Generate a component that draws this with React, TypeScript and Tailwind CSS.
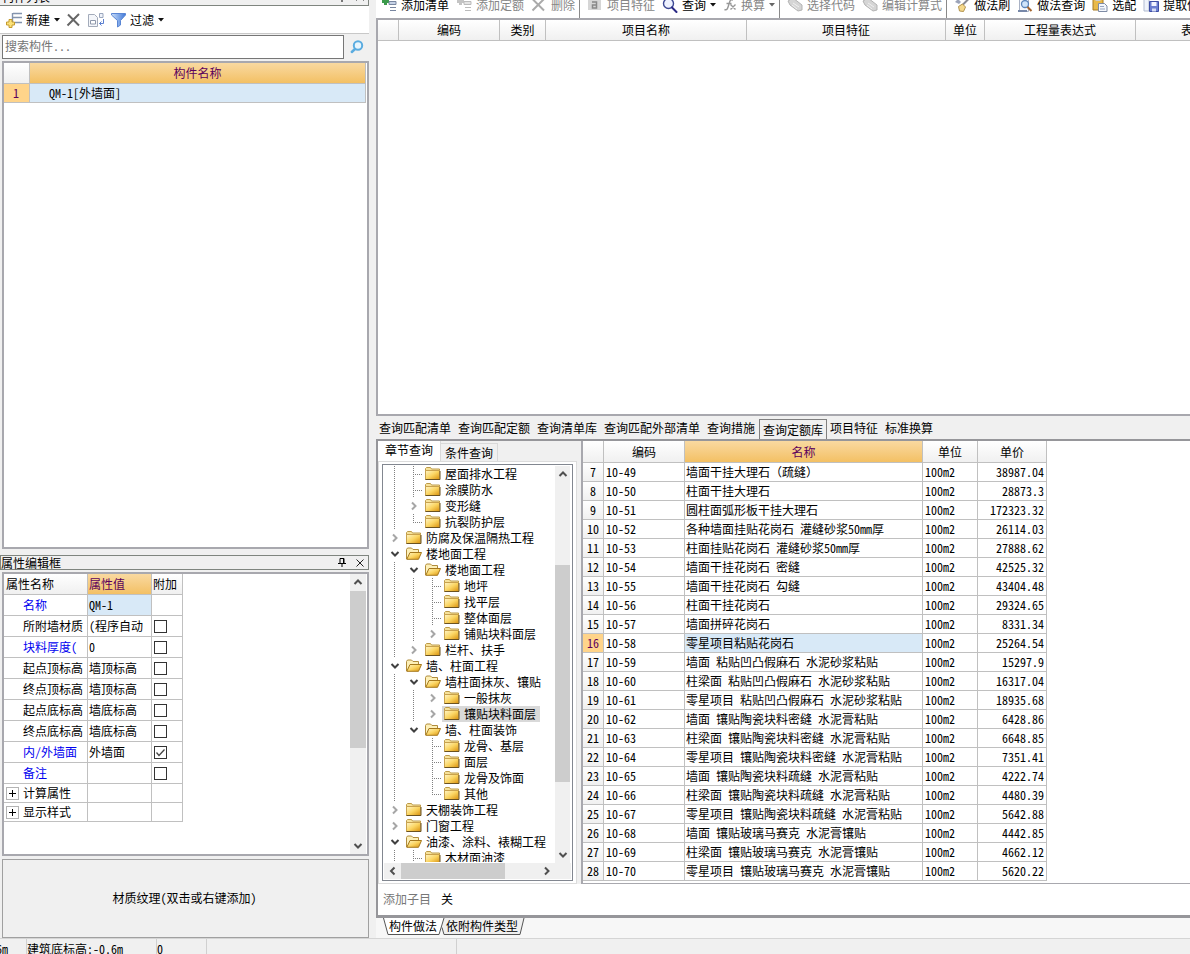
import type { ReactNode } from "react";

/* ---------- icons ---------- */

function Svg({ children, w = 16, h = 16, className = "" }: { children: ReactNode; w?: number; h?: number; className?: string }) {
  return (
    <svg aria-hidden="true" width={w} height={h} viewBox={`0 0 ${w} ${h}`} className={`block shrink-0 ${className}`}>
      {children}
    </svg>
  );
}

const Gradients = () => (
  <svg aria-hidden="true" width="0" height="0" className="absolute">
    <defs>
      <linearGradient id="folder" x1="0" y1="0" x2="1" y2="1">
        <stop offset="0" stopColor="#fff6c8" />
        <stop offset="0.5" stopColor="#fbd562" />
        <stop offset="1" stopColor="#d8900c" />
      </linearGradient>
      <linearGradient id="funnel" x1="0" y1="0" x2="1" y2="0">
        <stop offset="0" stopColor="#c9defa" />
        <stop offset="1" stopColor="#3f78d8" />
      </linearGradient>
    </defs>
  </svg>
);

const NewIcon = () => (
  <Svg>
    <path d="M6.500 1v9M7 1.500h9M7 5.500h9M9 10.500h7" stroke="#8393ad" strokeWidth="1.400" fill="none" />
    <path d="M3 7.500h3v2.500h2.500v3H6v2.500H3V13H.5v-3H3z" fill="#fbe27a" stroke="#c49a2c" />
  </Svg>
);
const CrossIcon = ({ color = "#666" }: { color?: string }) => (
  <Svg>
    <path d="M2 2.500l11 11M13 2L1.500 13.500" stroke={color} strokeWidth="2" fill="none" />
  </Svg>
);
const CopyIcon = () => (
  <Svg>
    <path d="M.5 2.500h6l3 3v9H.5z" fill="#f4f6fa" stroke="#a3abba" />
    <path d="M2.500 8.500h5v3.500h-5z" fill="#fff" stroke="#8e98ab" />
    <path d="M11.500 1.500h3.500v4h-3.500z" fill="#eef2fa" stroke="#9aa6bd" />
    <path d="M15.500 7v4.500h-4M13.500 9.500l-2 2 2 2" stroke="#5b7fd0" fill="none" />
  </Svg>
);
const FunnelIcon = () => (
  <Svg>
    <path d="M1.500 1.500h14v1.500L10.500 8.500V13l-3 2V8.500L1.500 3z" fill="url(#funnel)" stroke="#5a86d4" />
  </Svg>
);
const SearchBlueIcon = () => (
  <Svg>
    <circle cx="9" cy="6.500" r="4.200" fill="#e8f5fd" stroke="#5aace0" strokeWidth="2" />
    <path d="M6 10L2.800 13" stroke="#5aace0" strokeWidth="2.500" strokeLinecap="round" />
  </Svg>
);
const AddListIcon = ({ gray = false }: { gray?: boolean }) => (
  <Svg>
    <path d="M4.500 1v7M1 4.500h7" stroke={gray ? "#c4c4c4" : "#3b9a4b"} strokeWidth="3" />
    <path d="M8 4.500h7v3H8z" fill={gray ? "#e4e4e4" : "#c6d2e6"} stroke={gray ? "#bbb" : "#7886a0"} />
    <path d="M9 10.500h6M9 13.500h6" stroke={gray ? "#bbb" : "#7886a0"} />
  </Svg>
);
const FeatureIcon = () => (
  <Svg>
    <path d="M1 1h13v12H1z" fill="#d6d6d6" />
    <path d="M5 5h4.500v6H5.500V8H9" stroke="#888" strokeWidth="1.500" fill="none" />
  </Svg>
);
const QueryIcon = () => (
  <Svg>
    <circle cx="6.500" cy="6.500" r="5" fill="#eef2ff" stroke="#3e4a94" strokeWidth="1.400" />
    <path d="M10 10.500l4.500 4.500" stroke="#2b2a86" strokeWidth="2" strokeLinecap="round" />
  </Svg>
);
const FxIcon = () => (
  <Svg w={14}>
    <path d="M10 3C7 2 7 4 6 7s-1.500 7-4.500 5.500M3.500 6.500h5M7.500 7.500l5 5M12.500 7.500l-5 5" stroke="#979797" strokeWidth="1.400" fill="none" />
  </Svg>
);
const TagIcon = () => (
  <Svg>
    <path d="M1 4l5-3 9 7v5l-4 1-8-6z" fill="#d5d5d5" stroke="#b3b3b3" />
    <path d="M6 6l6 4M5 8l5 4" stroke="#f0f0f0" />
  </Svg>
);
const BrushIcon = () => (
  <Svg>
    <path d="M14.500 2L8.500 8" stroke="#8b8b93" strokeWidth="2" />
    <path d="M1 5l3-3 3 3-2 2z" fill="#9ba3b8" />
    <path d="M4.500 9.500l4-2.500 3 3-2 4.500-4-.5z" fill="#f6d98c" stroke="#b2934d" />
  </Svg>
);
const PreviewIcon = () => (
  <Svg>
    <path d="M2.500.5h9v14h-9z" fill="#f6f8fc" stroke="#a9b2c5" />
    <circle cx="8" cy="7" r="3.500" fill="#cfe4fa" stroke="#5c86bb" strokeWidth="1.300" />
    <path d="M10.500 10l4 4" stroke="#a4642e" strokeWidth="2" />
    <path d="M1 14h9" stroke="#7687a8" strokeWidth="2" />
  </Svg>
);
const PasteIcon = () => (
  <Svg>
    <path d="M1 2h10v11H1z" fill="#e9b949" stroke="#a87b22" />
    <path d="M3.500 1h5v3h-5z" fill="#ccc" />
    <path d="M6.500 6.500h6l2.500 2.500v5.500H6.500z" fill="#f4f7fc" stroke="#7e8ba5" />
    <path d="M8 9.500h4M8 12h5" stroke="#97a5c0" />
  </Svg>
);
const SaveIcon = () => (
  <Svg>
    <path d="M1 1h5v13H1z" fill="#eef2fa" stroke="#b1bbd0" />
    <path d="M6.500 4.500h9v10h-9z" fill="#6c7fd0" stroke="#3e4ea4" />
    <path d="M8.500 5h5v4h-5z" fill="#f3f5ff" />
    <path d="M9 11.500h4v3H9z" fill="#d5dcf5" />
  </Svg>
);
const Caret = ({ gray = false }: { gray?: boolean }) => (
  <Svg w={6} h={4}>
    <path d="M0 0h6L3 3.500z" fill={gray ? "#666" : "#111"} />
  </Svg>
);
const PinIcon = () => (
  <Svg w={8} h={9}>
    <path d="M2 5.500V.5h4v5M5.500 1v4M0 5.500h8M4 6v3" stroke="#000" fill="none" />
  </Svg>
);
const CloseIcon = () => (
  <Svg w={8} h={8}>
    <path d="M.5.5l7 7M7.500.5l-7 7" stroke="#222" fill="none" />
  </Svg>
);
const Folder = ({ open }: { open: boolean }) => (
  <Svg>
    {open ? (
      <>
        <path d="M.5 13V3.500l1-1.500h4l1.500 1.500h5.500V6" fill="#fdf0b8" stroke="#b08c3c" />
        <path d="M.8 13.300L4 6.500h11.500L12.500 13.300z" fill="url(#folder)" stroke="#a5781d" />
      </>
    ) : (
      <>
        <path d="M.5 4V2.500L1.500 1.500h4l1 1.500h8v2H.5z" fill="#f7e29a" stroke="#bd9a48" />
        <path d="M.5 4.500h14v9H.5z" fill="url(#folder)" stroke="#c9a24e" />
        <path d="M.5 13.500h14.500V5" stroke="#6b5220" fill="none" />
      </>
    )}
  </Svg>
);

const chevrons = {
  up: "M1.500 6L5 2.500 8.500 6",
  down: "M1.500 3L5 6.500 8.500 3",
  left: "M6.500 1.500L3 5l3.500 3.500",
  right: "M3 1.500L6.500 5 3 8.500",
};
const Chevron = ({ dir, color = "#505050" }: { dir: keyof typeof chevrons; color?: string }) => (
  <Svg w={10} h={10}>
    <path d={chevrons[dir]} stroke={color} strokeWidth="2" fill="none" />
  </Svg>
);

/* ---------- data ---------- */

// Guide codes per 19px column: "|" line, "+" branch, "L" last branch, ">" collapsed, "v" expanded, "." blank
const tree: [string, string][] = [
  ["|+", "屋面排水工程"],
  ["|+", "涂膜防水"],
  ["|>", "变形缝"],
  ["|L", "抗裂防护层"],
  [">", "防腐及保温隔热工程"],
  ["v", "楼地面工程"],
  ["|v", "楼地面工程"],
  ["||+", "地坪"],
  ["||+", "找平层"],
  ["||+", "整体面层"],
  ["||>", "铺贴块料面层"],
  ["|>", "栏杆、扶手"],
  ["v", "墙、柱面工程"],
  ["|v", "墙柱面抹灰、镶贴"],
  ["||>", "一般抹灰"],
  ["||>", "镶贴块料面层"],
  ["|v", "墙、柱面装饰"],
  ["|.+", "龙骨、基层"],
  ["|.+", "面层"],
  ["|.+", "龙骨及饰面"],
  ["|.L", "其他"],
  [">", "天棚装饰工程"],
  [">", "门窗工程"],
  ["v", "油漆、涂料、裱糊工程"],
  ["|+", "木材面油漆"],
];
const selectedNode = 15;

const quotas: [number, string, string][] = [
  [49, "墙面干挂大理石（疏缝）", "38987.04"],
  [50, "柱面干挂大理石", "28873.3"],
  [51, "圆柱面弧形板干挂大理石", "172323.32"],
  [52, "各种墙面挂贴花岗石 灌缝砂浆50mm厚", "26114.03"],
  [53, "柱面挂贴花岗石 灌缝砂浆50mm厚", "27888.62"],
  [54, "墙面干挂花岗石 密缝", "42525.32"],
  [55, "墙面干挂花岗石 勾缝", "43404.48"],
  [56, "柱面干挂花岗石", "29324.65"],
  [57, "墙面拼碎花岗石", "8331.34"],
  [58, "零星项目粘贴花岗石", "25264.54"],
  [59, "墙面 粘贴凹凸假麻石 水泥砂浆粘贴", "15297.9"],
  [60, "柱梁面 粘贴凹凸假麻石 水泥砂浆粘贴", "16317.04"],
  [61, "零星项目 粘贴凹凸假麻石 水泥砂浆粘贴", "18935.68"],
  [62, "墙面 镶贴陶瓷块料密缝 水泥膏粘贴", "6428.86"],
  [63, "柱梁面 镶贴陶瓷块料密缝 水泥膏粘贴", "6648.85"],
  [64, "零星项目 镶贴陶瓷块料密缝 水泥膏粘贴", "7351.41"],
  [65, "墙面 镶贴陶瓷块料疏缝 水泥膏粘贴", "4222.74"],
  [66, "柱梁面 镶贴陶瓷块料疏缝 水泥膏粘贴", "4480.39"],
  [67, "零星项目 镶贴陶瓷块料疏缝 水泥膏粘贴", "5642.88"],
  [68, "墙面 镶贴玻璃马赛克 水泥膏镶贴", "4442.85"],
  [69, "柱梁面 镶贴玻璃马赛克 水泥膏镶贴", "4662.12"],
  [70, "零星项目 镶贴玻璃马赛克 水泥膏镶贴", "5620.22"],
];

type Prop = { name: string; value: string; blue?: boolean; check?: boolean };
const props: Prop[] = [
  { name: "名称", value: "QM-1", blue: true },
  { name: "所附墙材质", value: "(程序自动", check: false },
  { name: "块料厚度(", value: "0", blue: true, check: false },
  { name: "起点顶标高", value: "墙顶标高", check: false },
  { name: "终点顶标高", value: "墙顶标高", check: false },
  { name: "起点底标高", value: "墙底标高", check: false },
  { name: "终点底标高", value: "墙底标高", check: false },
  { name: "内/外墙面", value: "外墙面", blue: true, check: true },
  { name: "备注", value: "", blue: true, check: false },
];

/* ---------- shared pieces ---------- */

const headBg = "bg-linear-to-b from-white to-[#f0f0f0] font-normal";
const activeBg = "bg-linear-to-b from-[#f9d9a0] to-[#f3c063] font-normal text-[#5c005c]";
const line = "border-r border-b border-[#c0c0c0]";

function Tool({ icon, label, disabled = false, caret = false }: { icon: ReactNode; label: string; disabled?: boolean; caret?: boolean }) {
  return (
    <button disabled={disabled} className={`flex shrink-0 items-center gap-1 ${disabled ? "text-[#868686]" : "text-black"}`}>
      {icon}
      {label}
      {caret && <Caret gray={disabled} />}
    </button>
  );
}

const Divider = () => <span className="-ml-[3px] h-full w-px shrink-0 bg-[#8a8a8a]" />;

function Guide({ code }: { code: string }) {
  if (code === ">" || code === "v") {
    return (
      <span className="flex w-[19px] shrink-0 items-center justify-center">
        <Chevron dir={code === ">" ? "right" : "down"} color={code === ">" ? "#a6a6a6" : "#404040"} />
      </span>
    );
  }
  return (
    <Svg w={19} h={16}>
      {(code === "|" || code === "+") && <path d="M9.500 0v16" stroke="#808080" strokeDasharray="1 1" />}
      {code === "L" && <path d="M9.500 0v8" stroke="#808080" strokeDasharray="1 1" />}
      {(code === "+" || code === "L") && <path d="M9 8.500h10" stroke="#808080" strokeDasharray="1 1" />}
    </Svg>
  );
}

/* ---------- left side ---------- */

function ComponentList() {
  return (
    <section className="flex min-h-0 flex-1 flex-col">
      <header className="flex h-[6px] shrink-0 items-end overflow-hidden border-r border-b border-[#7f857f]">
        <div className="flex h-4 flex-1 shrink-0 items-center pr-1">
          <h2 className="flex-1 pl-[2px]">构件列表</h2>
          <button aria-label="固定" className="mr-[10px]"><PinIcon /></button>
          <button aria-label="关闭"><CloseIcon /></button>
        </div>
      </header>
      <div className="flex h-[27px] shrink-0 items-center gap-[6px] bg-white pl-[6px]">
        <Tool icon={<NewIcon />} label="新建" caret />
        <button aria-label="删除"><CrossIcon /></button>
        <button aria-label="复制"><CopyIcon /></button>
        <Tool icon={<FunnelIcon />} label="过滤" caret />
      </div>
      <div className="flex h-[27px] shrink-0 items-center border-t border-[#c8c8c8] pl-[2px]">
        <input
          aria-label="搜索构件"
          placeholder="搜索构件..."
          className="h-6 min-w-0 flex-1 border border-[#767676] bg-white px-[2px] pb-1 outline-none placeholder:text-[#757575]"
        />
        <button aria-label="搜索" className="flex h-6 w-[25px] items-center justify-center"><SearchBlueIcon /></button>
      </div>
      <div className="mt-px ml-[2px] flex-1 border-2 border-[#a8a8ae] bg-white pr-px">
        <table className="w-full table-fixed border-separate border-spacing-0">
          <colgroup>
            <col className="w-[26px]" />
            <col />
          </colgroup>
          <thead>
            <tr className="h-[21px]">
              <th className={`${headBg} ${line}`} />
              <th className={`${activeBg} ${line}`}>构件名称</th>
            </tr>
          </thead>
          <tbody>
            <tr className="h-[19px]">
              <td className={`bg-[#ffd48a] pr-px text-center text-[#5c005c] ${line}`}>1</td>
              <td className={`bg-[#d8e9f7] pl-[19px] ${line}`}>QM-1[外墙面]</td>
            </tr>
          </tbody>
        </table>
      </div>
    </section>
  );
}

function PropertyEditor() {
  return (
    <section className="mt-[6px] shrink-0">
      <header className="flex h-[15px] items-center border border-[#7f857f] pr-1">
        <h2 className="flex-1">属性编辑框</h2>
        <button aria-label="固定" className="mr-[10px]"><PinIcon /></button>
        <button aria-label="关闭"><CloseIcon /></button>
      </header>
      <div className="mt-[2px] ml-[2px] flex h-[284px] justify-between border-2 border-[#a8a8ae] bg-white">
        <div>
          <table className="w-[179px] table-fixed border-separate border-spacing-0">
            <colgroup>
              <col className="w-[84px]" />
              <col className="w-[64px]" />
              <col className="w-[31px]" />
            </colgroup>
            <thead>
              <tr className="h-[21px] text-left">
                <th className={`${headBg} ${line} pl-[2px]`}>属性名称</th>
                <th className={`${activeBg} ${line} pl-px`}>属性值</th>
                <th className={`${headBg} ${line} pl-px`}>附加</th>
              </tr>
            </thead>
            <tbody>
              {props.map((p, i) => (
                <tr key={p.name} className="h-[21px]">
                  <td className={`overflow-hidden pl-[19px] ${line} ${p.blue ? "text-[#0000f0]" : ""}`}>{p.name}</td>
                  <td className={`overflow-hidden pl-px ${line} ${i === 0 ? "bg-[#d8e9f7]" : ""}`}>{p.value}</td>
                  <td className={`pl-[2px] ${line}`}>
                    {p.check !== undefined && (
                      <span className="relative block size-[13px]">
                        <input
                          type="checkbox"
                          aria-label={`附加 ${p.name}`}
                          defaultChecked={p.check}
                          className="peer block size-[13px] appearance-none border border-[#333] bg-white"
                        />
                        <svg aria-hidden="true" viewBox="0 0 13 13" className="pointer-events-none absolute inset-0 hidden peer-checked:block">
                          <path d="M2.500 6.500l2.500 3 5.500-6" stroke="#444" strokeWidth="1.300" fill="none" />
                        </svg>
                      </span>
                    )}
                  </td>
                </tr>
              ))}
              {["计算属性", "显示样式"].map((n) => (
                <tr key={n} className="h-[19px]">
                  <td className={`pl-[2px] ${line}`}>
                    <span className="flex items-center gap-1">
                      <button aria-label={`展开${n}`} className="flex size-[13px] items-center justify-center border border-[#b4b4b4]">
                        <Svg w={7} h={7}>
                          <path d="M0 3.500h7M3.500 0v7" stroke="#000" />
                        </Svg>
                      </button>
                      {n}
                    </span>
                  </td>
                  <td className={line} />
                  <td className={line} />
                </tr>
              ))}
            </tbody>
          </table>
        </div>
        <div className="mr-px flex w-4 flex-col items-center bg-[#f0f0f0]">
          <span className="flex h-[17px] items-center"><Chevron dir="up" /></span>
          <span className="h-[157px] w-full bg-[#cdcdcd]" />
          <span className="mt-auto flex h-[17px] items-center"><Chevron dir="down" /></span>
        </div>
      </div>
      <button className="mt-[3px] ml-[2px] flex h-[79px] w-[calc(100%-2px)] items-center justify-center border border-[#a0a0a0] pr-[2px] pb-[2px]">
        材质纹理(双击或右键添加)
      </button>
    </section>
  );
}

/* ---------- right side ---------- */

function MethodToolbar() {
  return (
    <div className="flex h-[18px] shrink-0 items-end overflow-hidden bg-white">
      <div className="flex h-[26px] shrink-0 items-center gap-[7px] pl-[5px]">
        <Tool icon={<AddListIcon />} label="添加清单" />
        <Tool icon={<AddListIcon gray />} label="添加定额" disabled />
        <Tool icon={<CrossIcon color="#aaa" />} label="删除" disabled />
        <Divider />
        <Tool icon={<FeatureIcon />} label="项目特征" disabled />
        <Tool icon={<QueryIcon />} label="查询" caret />
        <Tool icon={<FxIcon />} label="换算" disabled caret />
        <Divider />
        <Tool icon={<TagIcon />} label="选择代码" disabled />
        <Tool icon={<TagIcon />} label="编辑计算式" disabled />
        <Divider />
        <Tool icon={<BrushIcon />} label="做法刷" />
        <Tool icon={<PreviewIcon />} label="做法查询" />
        <Tool icon={<PasteIcon />} label="选配" />
        <Tool icon={<SaveIcon />} label="提取做法" />
      </div>
    </div>
  );
}

function MethodGrid() {
  return (
    <div className="min-h-0 flex-1 overflow-hidden border-t-2 border-b-2 border-l-2 border-[#a8a8ae] bg-white">
      <table className="w-[909px] table-fixed border-separate border-spacing-0">
        <colgroup>
          <col className="w-[21px]" />
          <col className="w-[101px]" />
          <col className="w-[46px]" />
          <col className="w-[201px]" />
          <col className="w-[199px]" />
          <col className="w-[39px]" />
          <col className="w-[151px]" />
          <col className="w-[151px]" />
        </colgroup>
        <thead>
          <tr className="h-[21px]">
            {["", "编码", "类别", "项目名称", "项目特征", "单位", "工程量表达式", "表达式说明"].map((t) => (
              <th key={t} className={`${headBg} ${line}`}>{t}</th>
            ))}
          </tr>
        </thead>
      </table>
    </div>
  );
}

function QueryTabs() {
  const tabs = ["查询匹配清单", "查询匹配定额", "查询清单库", "查询匹配外部清单", "查询措施", "查询定额库", "项目特征", "标准换算"];
  return (
    <div role="tablist" className="flex h-[25px] shrink-0 items-end border-b-2 border-[#96969a]">
      {tabs.map((t) =>
        t === "查询定额库" ? (
          <button key={t} role="tab" aria-selected="true" className="h-5 shrink-0 border border-b-0 border-[#808080] bg-[#f0f0f0] px-[3px]">
            {t}
          </button>
        ) : (
          <button key={t} role="tab" aria-selected="false" className="h-[21px] shrink-0 pr-1 pb-[2px] pl-[3px]">
            {t}
          </button>
        ),
      )}
    </div>
  );
}

function ChapterTree() {
  return (
    <div className="flex w-[199px] shrink-0 flex-col">
      <div role="tablist" className="flex h-[20px] shrink-0 items-end">
        <button role="tab" aria-selected="true" className="h-5 w-[63px] border-r border-[#d9d9d9] bg-white pb-[2px]">章节查询</button>
        <button role="tab" aria-selected="false" className="h-[18px] w-[57px] border-t border-r border-[#d9d9d9]">条件查询</button>
      </div>
      <div className="flex min-h-0 flex-1 border border-[#dcdcdc] bg-white px-[3px] pt-[2px] pb-[2px]">
        <div className="flex min-w-0 flex-1 flex-col border border-[#828790] p-px">
          <div className="flex min-h-0 flex-1">
            <ul role="tree" aria-label="章节" className="h-[396px] min-w-0 flex-1 overflow-hidden pl-px">
              {tree.map(([guides, label], i) => (
                <li key={i} role="treeitem" aria-selected={i === selectedNode} className="flex h-4 whitespace-nowrap">
                  {guides.split("").map((g, j) => (
                    <Guide key={j} code={g} />
                  ))}
                  <span className={`flex items-center gap-[2px] pl-[2px] ${i === selectedNode ? "bg-[#d9d9d9]" : ""}`}>
                    <Folder open={guides.endsWith("v")} />
                    <span className="pr-1 pl-[2px]">{label}</span>
                  </span>
                </li>
              ))}
            </ul>
            <div className="mr-px flex w-[15px] shrink-0 flex-col items-center bg-[#f0f0f0]">
              <span className="flex h-[17px] items-center"><Chevron dir="up" /></span>
              <span className="mt-[82px] h-[217px] w-full bg-[#cdcdcd]" />
              <span className="mt-auto flex h-[17px] items-center"><Chevron dir="down" /></span>
            </div>
          </div>
          <div className="flex h-4 shrink-0 items-center bg-[#f0f0f0] pr-4">
            <span className="flex w-[17px] justify-center"><Chevron dir="left" /></span>
            <span className="h-full w-[104px] bg-[#cdcdcd]" />
            <span className="ml-auto flex w-[17px] justify-center"><Chevron dir="right" /></span>
          </div>
        </div>
      </div>
    </div>
  );
}

function QuotaTable() {
  return (
    <div className="ml-[4px] min-w-0 flex-1 overflow-hidden border-b border-l-2 border-[#a8a8ae] bg-white">
      <table className="w-[464px] table-fixed border-separate border-spacing-0">
        <colgroup>
          <col className="w-[21px]" />
          <col className="w-[81px]" />
          <col className="w-[238px]" />
          <col className="w-[55px]" />
          <col className="w-[69px]" />
        </colgroup>
        <thead>
          <tr className="h-[22px]">
            <th className={`${headBg} ${line}`} />
            <th className={`${headBg} ${line}`}>编码</th>
            <th className={`${activeBg} ${line}`}>名称</th>
            <th className={`${headBg} ${line}`}>单位</th>
            <th className={`${headBg} ${line}`}>单价</th>
          </tr>
        </thead>
        <tbody>
          {quotas.map(([code, name, price], i) => {
            const on = code === 58;
            return (
              <tr key={code} className="h-[19px] whitespace-nowrap">
                <td className={`text-center ${line} ${on ? "bg-[#ffd48a] text-[#5c005c]" : "bg-linear-to-b from-white to-[#f0f0f0]"}`}>{i + 7}</td>
                <td className={`pl-[2px] ${line}`}>10-{code}</td>
                <td className={`pl-px ${line} ${on ? "bg-[#d8e9f7]" : ""}`}>{name}</td>
                <td className={`pl-[2px] ${line}`}>100m2</td>
                <td className={`pr-[2px] text-right ${line}`}>{price}</td>
              </tr>
            );
          })}
        </tbody>
      </table>
    </div>
  );
}

function SheetTabs() {
  return (
    <div role="tablist" className="flex h-[20px] shrink-0 items-start bg-[#f7f7f7] pl-[7px]">
      <Svg w={6} h={17}>
        <path d="M0 0h6v16.500H5z" fill="#fff" />
        <path d="M.5 0L5 16.500h1" stroke="#555" fill="none" />
      </Svg>
      <button role="tab" aria-selected="true" className="h-[17px] border-b border-[#555] bg-white">构件做法</button>
      <Svg w={9} h={17}>
        <path d="M0 0h7L2 16.500H0z" fill="#fff" />
        <path d="M7 0h2v17H6L5 10z" fill="#f0f0f0" />
        <path d="M0 16.500h2L7 0M5 9.500l2 7h2" stroke="#555" fill="none" />
      </Svg>
      <button role="tab" aria-selected="false" className="h-[17px] border-b border-[#555] bg-[#f0f0f0]">依附构件类型</button>
      <Svg w={7} h={17}>
        <path d="M0 0h6L2 16.500H0z" fill="#f0f0f0" />
        <path d="M0 16.500h2L6 0" stroke="#555" fill="none" />
      </Svg>
    </div>
  );
}

export default function App() {
  return (
    <div className="flex h-screen w-full flex-col overflow-hidden bg-[#f0f0f0] font-['Noto_Sans_Mono_CJK_SC','Noto_Sans_CJK_SC',sans-serif] text-[12px] leading-4 text-black">
      <Gradients />
      <main className="flex min-h-0 flex-1">
        <aside className="flex w-[369px] shrink-0 flex-col">
          <ComponentList />
          <PropertyEditor />
        </aside>
        <div className="ml-[7px] flex min-w-0 flex-1 flex-col">
          <MethodToolbar />
          <MethodGrid />
          <QueryTabs />
          <section className="flex shrink-0 flex-col border-b-[3px] border-l-2 border-[#96969a] bg-white">
            <div className="flex h-[443px] bg-[#f0f0f0]">
              <ChapterTree />
              <QuotaTable />
            </div>
            <div className="flex h-[31px] items-center gap-[10px] pb-[2px] pl-[5px]">
              <span className="text-[#777]">添加子目</span>
              <button>关</button>
            </div>
          </section>
          <SheetTabs />
        </div>
      </main>
      <footer className="h-4 shrink-0 overflow-hidden border-t border-[#d5d5d5]">
        <div className="flex h-[20px] items-center whitespace-nowrap">
          <span className="flex h-full w-[27px] items-center justify-start border-r border-[#d0d0d0]">
            <span className="flex w-2 justify-end">-3.6m</span>
          </span>
          <span className="flex h-full w-[130px] items-center border-r border-[#d0d0d0]">建筑底标高:-0.6m</span>
          <span className="flex h-full w-[50px] items-center border-r border-[#d0d0d0]">0</span>
          <span className="h-full w-[250px] border-r border-[#d0d0d0]" />
        </div>
      </footer>
    </div>
  );
}
